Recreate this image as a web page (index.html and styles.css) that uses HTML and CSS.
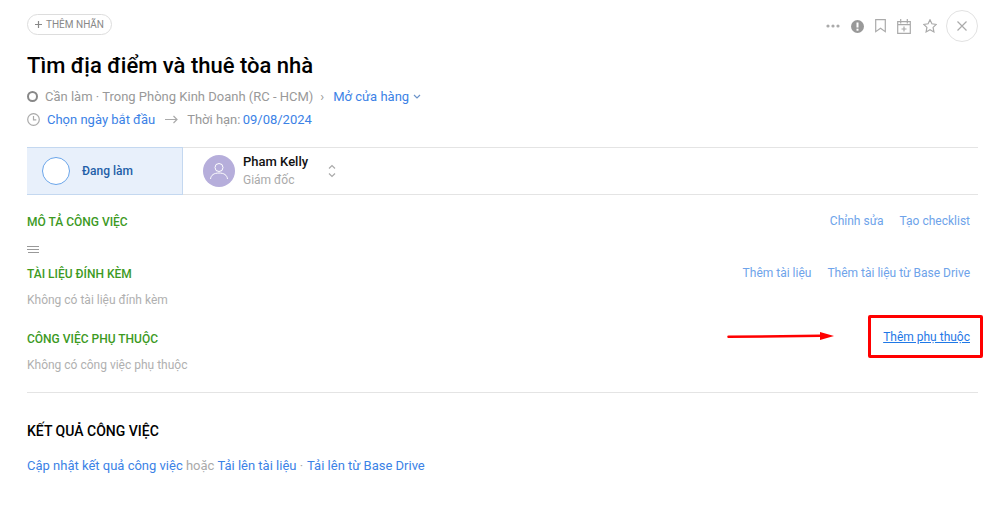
FILE: index.html
```html
<!DOCTYPE html>
<html lang="vi">
<head>
    <meta charset="UTF-8">
    <title>Tìm địa điểm và thuê tòa nhà</title>
    <link rel="stylesheet" href="styles.css">
</head>
<body>
    <div class="container">
        <div class="top-bar">
            <a class="tag-btn">
                <svg class="icon-line icon-plus" width="7" height="7" viewBox="0 0 7 7"><path d="M3.500 0v7M0 3.500h7"/></svg>
                THÊM NHÃN
            </a>
            <div class="top-actions">
                <svg class="icon-more" width="14" height="4" viewBox="0 0 14 4"><circle cx="2" cy="2" r="1.600"/><circle cx="7" cy="2" r="1.600"/><circle cx="12" cy="2" r="1.600"/></svg>
                <svg class="icon-alert" width="13" height="13" viewBox="0 0 13 13"><circle cx="6.500" cy="6.500" r="6.500" fill="#999"/><rect x="5.500" y="2.500" width="2" height="5" fill="#fff"/><rect x="5.500" y="8.700" width="2" height="2" fill="#fff"/></svg>
                <svg class="icon-line icon-mark" width="11" height="14" viewBox="0 0 11 14"><path d="M.7.700h9.600v12L5.500 9.300.7 12.700z"/></svg>
                <svg class="icon-line icon-cal" width="14" height="15" viewBox="0 0 14 15"><path d="M.7 2.700h12.600v11.600H.7zM.7 5.700h12.600M3.700 0v4.500M10.300 0v4.500M7 7.500v5M4.500 10h5"/></svg>
                <svg class="icon-line icon-star" width="14" height="14" viewBox="0 0 14 14"><path d="M7 .8l1.900 4 4.400.6-3.200 3 .8 4.500L7 10.700l-3.900 2.200.8-4.500-3.200-3 4.400-.6z"/></svg>
                <a class="close-btn">
                    <svg class="icon-line" width="12" height="12" viewBox="0 0 12 12"><path d="M1.500 1.500l9 9M10.500 1.500l-9 9"/></svg>
                </a>
            </div>
        </div>

        <h1 class="title">Tìm địa điểm và thuê tòa nhà</h1>

        <div class="meta-row">
            <span class="status-ring"></span>
            <span class="muted">Cần làm · Trong Phòng Kinh Doanh (RC - HCM)</span>
            <span class="muted crumb">›</span>
            <a class="link">Mở cửa hàng</a>
            <svg class="icon-line caret" width="8" height="5" viewBox="0 0 8 5"><path d="M1 1l3 3 3-3"/></svg>
        </div>
        <div class="meta-row date-row">
            <svg class="icon-line" width="13" height="13" viewBox="0 0 13 13"><circle cx="6.500" cy="6.500" r="5.800"/><path d="M6.500 3v3.800h2.800"/></svg>
            <a class="link start-date">Chọn ngày bắt đầu</a>
            <svg class="icon-line arrow" width="13" height="9" viewBox="0 0 13 9"><path d="M0 4.500h12M8.500 1l3.500 3.500L8.500 8"/></svg>
            <span class="muted">Thời hạn: <a class="link due-date">09/08/2024</a></span>
        </div>

        <div class="status-bar">
            <div class="status-cell">
                <span class="status-circle"></span>
                <span class="status-label">Đang làm</span>
            </div>
            <div class="assignee">
                <span class="avatar">
                    <svg width="20" height="18" viewBox="0 0 20 18" fill="none" stroke="#fff" stroke-width="1"><circle cx="10" cy="5.500" r="4"/><path d="M1.500 17c.5-4 3.500-6 8.500-6s8 2 8.500 6"/></svg>
                </span>
                <div class="assignee-info">
                    <div class="assignee-name">Pham Kelly</div>
                    <div class="assignee-role">Giám đốc</div>
                </div>
                <svg class="icon-line updown" width="8" height="14" viewBox="0 0 8 14"><path d="M1 4.500l3-3 3 3M1 9.500l3 3 3-3"/></svg>
            </div>
        </div>

        <div class="section-head first">
            <span class="section-title">MÔ TẢ CÔNG VIỆC</span>
            <div class="section-links"><a>Chỉnh sửa</a><a>Tạo checklist</a></div>
        </div>
        <svg class="icon-lines" width="12" height="8" viewBox="0 0 12 8"><path d="M0 1.500h12M0 4.500h12M1 7.500h11"/></svg>

        <div class="section-head attach">
            <span class="section-title">TÀI LIỆU ĐÍNH KÈM</span>
            <div class="section-links"><a>Thêm tài liệu</a><a>Thêm tài liệu từ Base Drive</a></div>
        </div>
        <p class="empty">Không có tài liệu đính kèm</p>

        <div class="section-head depend">
            <span class="section-title">CÔNG VIỆC PHỤ THUỘC</span>
            <div class="section-links raised"><a class="underlined">Thêm phụ thuộc</a></div>
        </div>
        <p class="empty">Không có công việc phụ thuộc</p>

        <div class="result">
            <h3 class="result-title">KẾT QUẢ CÔNG VIỆC</h3>
            <p class="result-links"><a class="link">Cập nhật kết quả công việc</a> <span class="light">hoặc</span> <a class="link">Tải lên tài liệu</a> <span class="light dot">·</span> <a class="link">Tải lên từ Base Drive</a></p>
        </div>
    </div>

    <!-- annotation on top of the screenshot -->
    <svg class="note-arrow" width="110" height="12" viewBox="0 0 110 12"><path d="M2.500 6.800L95 5.800" stroke="#f00" stroke-width="2.500" stroke-linecap="round" fill="none"/><path d="M94 2l14 4-14 4z" fill="#f00"/></svg>
    <div class="note-box"></div>
</body>
</html>
```
FILE: styles.css
```css
body {
    margin: 0;
    background-color: white;
    font-family: Roboto, sans-serif;
    font-size: 13px;
    color: #999;
}
a {
    cursor: pointer;
}
p {
    margin: 0;
}
.container {
    padding: 10px 26px 0 27px;
}
.top-bar {
    display: flex;
    justify-content: space-between;
    align-items: flex-start;
    height: 39px;
}
.tag-btn {
    display: flex;
    align-items: center;
    gap: 4px;
    box-sizing: border-box;
    height: 21px;
    margin-top: 4px;
    padding: 0 7px;
    border: 1px solid #ddd;
    border-radius: 11px;
    font-size: 10px;
    color: #888;
}
.top-actions {
    display: flex;
    align-items: center;
}
.top-actions svg {
    flex: none;
}
.icon-more {
    fill: #aaa;
}
.icon-alert {
    margin-left: 11px;
}
.icon-mark,
.icon-cal {
    margin-left: 11px;
}
.icon-star {
    margin-left: 12px;
}
.icon-line {
    fill: none;
    stroke: #aaa;
    stroke-width: 1.200;
}
.icon-plus {
    stroke: #888;
}
.close-btn {
    display: flex;
    justify-content: center;
    align-items: center;
    width: 32px;
    height: 32px;
    margin-left: 9px;
    border: 1px solid #e2e2e2;
    border-radius: 50%;
    box-sizing: border-box;
}
.title {
    margin: 0;
    height: 34px;
    font-size: 22px;
    font-weight: 500;
    line-height: 34px;
    color: #000;
}
.meta-row {
    display: flex;
    align-items: center;
    height: 22px;
    margin-top: 2px;
}
.date-row {
    margin-top: 1px;
}
.muted {
    color: #999;
}
.link {
    color: #3b82e6;
}
.due-date {
    margin-left: -1px;
}
.status-ring {
    width: 7px;
    height: 7px;
    margin-right: 7px;
    border: 2px solid #888;
    border-radius: 50%;
}
.crumb {
    margin: 0 9px 0 7px;
}
.caret {
    margin-left: 4px;
    stroke: #6b93c9;
}
.start-date {
    margin-left: 7px;
}
.arrow {
    margin: 0 9px 0 10px;
}
.status-bar {
    display: flex;
    height: 46px;
    margin-top: 17px;
    border-top: 1px solid #e4e4e4;
    border-bottom: 1px solid #e4e4e4;
}
.status-cell {
    display: flex;
    align-items: center;
    gap: 12px;
    box-sizing: border-box;
    width: 156px;
    margin: -1px 0;
    padding-left: 15px;
    background-color: #e8f0fb;
    border: solid #c4d8f0;
    border-width: 1px 1px 1px 0;
}
.status-circle {
    width: 26px;
    height: 26px;
    background-color: white;
    border: 1px solid #6aa5ea;
    border-radius: 50%;
}
.status-label {
    font-size: 12px;
    font-weight: 500;
    color: #1f5fa8;
}
.assignee {
    display: flex;
    align-items: center;
    padding-left: 20px;
}
.avatar {
    display: flex;
    justify-content: center;
    align-items: center;
    width: 32px;
    height: 32px;
    background-color: #b6aedb;
    border-radius: 50%;
}
.assignee-info {
    margin-left: 8px;
}
.assignee-name {
    font-weight: 500;
    line-height: 16px;
    color: #111;
}
.assignee-role {
    margin-top: 1px;
    line-height: 18px;
    font-size: 12px;
    color: #aaa;
}
.updown {
    margin-left: 20px;
}
.section-head {
    display: flex;
    justify-content: space-between;
    align-items: center;
    height: 20px;
}
.section-head.first {
    margin-top: 17px;
}
.section-head.attach {
    margin-top: 11px;
}
.section-head.depend {
    margin-top: 19px;
}
.section-title {
    font-size: 12px;
    font-weight: 500;
    color: #3d9a1f;
}
.section-links {
    display: flex;
    gap: 16px;
    margin-bottom: 2px;
    padding-right: 8px;
    font-size: 12px;
    color: #6ea3ea;
}
.section-links.raised {
    margin-bottom: 4px;
}
.underlined {
    text-decoration: underline;
    color: #1f78e6;
}
.icon-lines {
    display: block;
    margin-top: 13px;
    fill: none;
    stroke: #999;
    stroke-width: 1;
}
.empty {
    margin-top: 6px;
    line-height: 20px;
    font-size: 12px;
    color: #b0b0b0;
}
.result {
    margin-top: 17px;
    border-top: 1px solid #e4e4e4;
}
.result-title {
    margin: 28px 0 0;
    font-size: 14px;
    font-weight: 500;
    line-height: 20px;
    color: #000;
}
.result-links {
    margin-top: 15px;
    line-height: 20px;
}
.light {
    color: #aaa;
}
.dot {
    margin-right: 1px;
}
.note-arrow {
    position: absolute;
    left: 726px;
    top: 330px;
}
.note-box {
    position: absolute;
    left: 868px;
    top: 315px;
    width: 109px;
    height: 37px;
    border: 3px solid #f00;
    border-radius: 2px;
}
```
